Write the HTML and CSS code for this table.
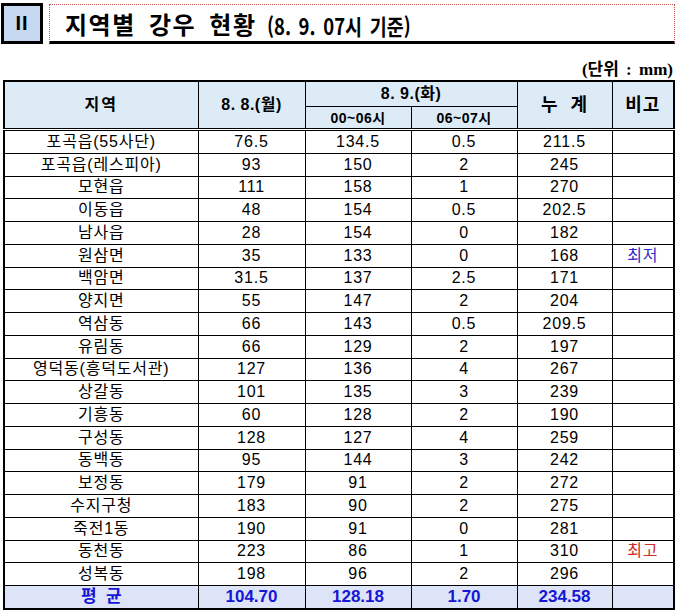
FILE: index.html
```html
<!DOCTYPE html>
<html lang="ko">
<head>
<meta charset="utf-8">
<link rel="stylesheet" href="styles.css">
</head>
<body>
<div class="title-bar">
  <div class="num-box">II</div>
  <div class="title-box"><span class="title-main">지역별 강우 현황</span><span class="title-sub">(8. 9. 07시 기준)</span></div>
</div>
<div class="unit">(단위 : mm)</div>
<table class="rain">
  <colgroup>
    <col class="c1"><col class="c2"><col class="c3"><col class="c4"><col class="c5"><col class="c6">
  </colgroup>
  <thead>
    <tr class="h1">
      <th rowspan="2" class="wide">지역</th>
      <th rowspan="2">8. 8.(월)</th>
      <th colspan="2">8. 9.(화)</th>
      <th rowspan="2" class="big">누&nbsp;&nbsp;계</th>
      <th rowspan="2" class="big">비고</th>
    </tr>
    <tr class="h2">
      <th class="small">00~06시</th>
      <th class="small">06~07시</th>
    </tr>
  </thead>
  <tbody>
    <tr><td>포곡읍(55사단)</td><td>76.5</td><td>134.5</td><td>0.5</td><td>211.5</td><td></td></tr>
    <tr><td>포곡읍(레스피아)</td><td>93</td><td>150</td><td>2</td><td>245</td><td></td></tr>
    <tr><td>모현읍</td><td>111</td><td>158</td><td>1</td><td>270</td><td></td></tr>
    <tr><td>이동읍</td><td>48</td><td>154</td><td>0.5</td><td>202.5</td><td></td></tr>
    <tr><td>남사읍</td><td>28</td><td>154</td><td>0</td><td>182</td><td></td></tr>
    <tr><td>원삼면</td><td>35</td><td>133</td><td>0</td><td>168</td><td class="low">최저</td></tr>
    <tr><td>백암면</td><td>31.5</td><td>137</td><td>2.5</td><td>171</td><td></td></tr>
    <tr><td>양지면</td><td>55</td><td>147</td><td>2</td><td>204</td><td></td></tr>
    <tr><td>역삼동</td><td>66</td><td>143</td><td>0.5</td><td>209.5</td><td></td></tr>
    <tr><td>유림동</td><td>66</td><td>129</td><td>2</td><td>197</td><td></td></tr>
    <tr><td>영덕동(흥덕도서관)</td><td>127</td><td>136</td><td>4</td><td>267</td><td></td></tr>
    <tr><td>상갈동</td><td>101</td><td>135</td><td>3</td><td>239</td><td></td></tr>
    <tr><td>기흥동</td><td>60</td><td>128</td><td>2</td><td>190</td><td></td></tr>
    <tr><td>구성동</td><td>128</td><td>127</td><td>4</td><td>259</td><td></td></tr>
    <tr><td>동백동</td><td>95</td><td>144</td><td>3</td><td>242</td><td></td></tr>
    <tr><td>보정동</td><td>179</td><td>91</td><td>2</td><td>272</td><td></td></tr>
    <tr><td>수지구청</td><td>183</td><td>90</td><td>2</td><td>275</td><td></td></tr>
    <tr><td>죽전1동</td><td>190</td><td>91</td><td>0</td><td>281</td><td></td></tr>
    <tr><td>동천동</td><td>223</td><td>86</td><td>1</td><td>310</td><td class="high">최고</td></tr>
    <tr><td>성복동</td><td>198</td><td>96</td><td>2</td><td>296</td><td></td></tr>
    <tr class="avg"><td>평&nbsp;&nbsp;균</td><td>104.70</td><td>128.18</td><td>1.70</td><td>234.58</td><td></td></tr>
  </tbody>
</table>
</body>
</html>
```

FILE: styles.css
```css
html, body {
  margin: 0;
  padding: 0;
  background: #ffffff;
}
body {
  font-family: "Liberation Sans", "Noto Sans CJK KR", sans-serif;
  color: #000;
}
.title-bar {
  display: flex;
  align-items: flex-start;
  padding: 3px 5px 0 1px;
  height: 44px;
  box-sizing: border-box;
}
.num-box {
  width: 42px;
  height: 41px;
  box-sizing: border-box;
  border: 3px solid #000;
  background: #c6d9f0;
  display: flex;
  align-items: center;
  justify-content: center;
  font-size: 20px;
  font-weight: bold;
  letter-spacing: 1px;
}
.title-box {
  flex: 1;
  margin-left: 6px;
  margin-top: 1px;
  height: 40px;
  box-sizing: border-box;
  border: 1px dotted #c0504d;
  border-bottom: 3px solid #000;
  padding-left: 15px;
  display: flex;
  align-items: center;
  gap: 10px;
  font-family: "Noto Sans CJK KR", sans-serif;
}
.title-main {
  font-size: 24px;
  font-weight: bold;
  letter-spacing: 1.5px;
  word-spacing: 5px;
}
.title-sub {
  font-size: 22px;
  font-weight: bold;
  transform: scaleX(0.84);
  transform-origin: left center;
  word-spacing: 3px;
  margin-top: 3px;
}
.unit {
  text-align: right;
  padding-right: 7px;
  margin-top: 15px;
  height: 21px;
  font-family: "Liberation Serif", "Noto Sans CJK KR", serif;
  font-weight: bold;
  font-size: 17px;
  line-height: 21px;
  word-spacing: 3px;
}
.rain {
  margin-left: 3px;
  width: 672px;
  table-layout: fixed;
  border-collapse: collapse;
  border: 2px solid #000;
  font-size: 16px;
}
.c1 { width: 194px; }
.c2 { width: 107px; }
.c3 { width: 106px; }
.c4 { width: 106px; }
.c5 { width: 95px; }
.c6 { width: 62px; }
.rain th, .rain td {
  border: 1px solid #000;
  padding: 0;
  text-align: center;
  vertical-align: middle;
  line-height: 18px;
  white-space: nowrap;
  overflow: hidden;
}
.rain td {
  letter-spacing: 0.8px;
  height: 21.76px;
}
.rain th {
  background: #ddebf7;
  font-weight: bold;
  font-size: 16px;
  letter-spacing: 0.5px;
}
.rain th.wide { letter-spacing: 2px; }
.rain th.small { font-size: 14px; }
.rain th.big { font-size: 18px; letter-spacing: 1px; }
.h1 th { height: 24px; }
.h2 th { height: 21px; }
.rain thead tr:last-child th, .rain thead th[rowspan] {
  border-bottom: 3px double #000;
}
.low { color: #2b2bc4; }
.high { color: #d42a2a; }
.avg td {
  background: #dde4f7;
  color: #1616d6;
  font-weight: bold;
  font-size: 17px;
  letter-spacing: 0;
}
```
